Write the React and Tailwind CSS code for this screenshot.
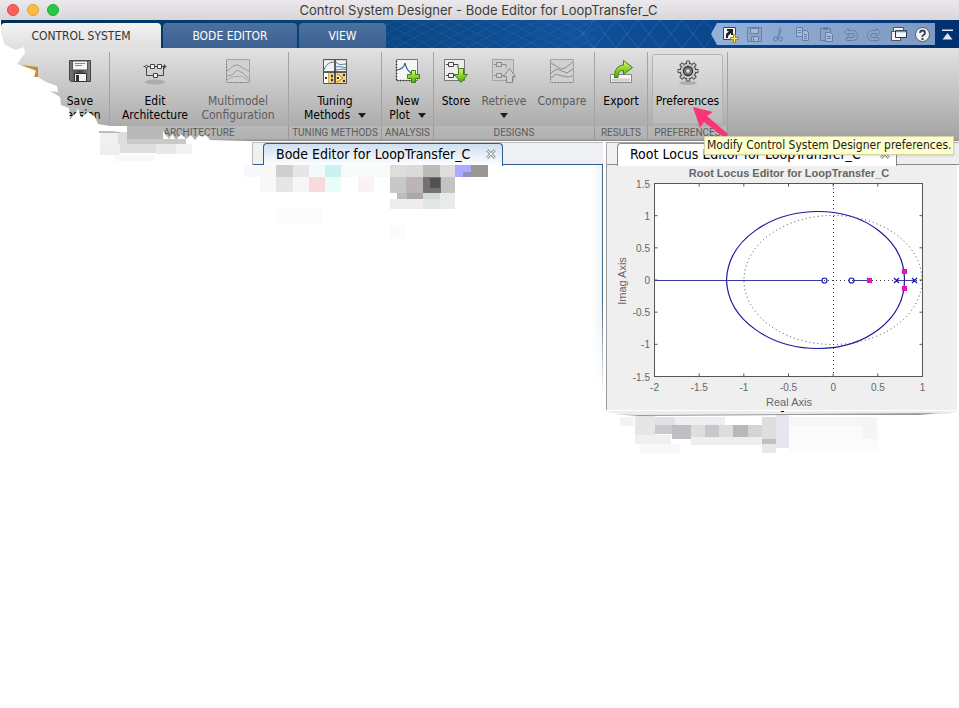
import React from "react";

const lucida = "font-['DejaVu_Sans_Condensed','Lucida_Grande','Noto_Sans',sans-serif]";

function DropArrow() {
  return (
    <svg width="8" height="5" viewBox="0 0 8 5" className="inline-block">
      <path d="M0 0h8L4 5z" fill="#1c1c1c" />
    </svg>
  );
}

function SaveIcon() {
  return (
    <svg width="28" height="28" viewBox="0 0 28 28">
      <defs>
        <linearGradient id="disk" x1="0" x2="1">
          <stop offset="0" stopColor="#777" />
          <stop offset="0.5" stopColor="#444" />
          <stop offset="1" stopColor="#888" />
        </linearGradient>
      </defs>
      <path d="M3.500 2.500h21v21H5l-1.500-1.500z" fill="url(#disk)" stroke="#444" />
      <path d="M6.500 3h15v9h-15z" fill="#f6f6f6" stroke="#555" />
      <path d="M9 5.500h10M9 7.500h7" stroke="#888" />
      <path d="M8.500 15.500h12v8h-12z" fill="#f2f2f2" stroke="#333" />
      <path d="M10 17h3v6h-3z" fill="#333" />
    </svg>
  );
}

function ArchitectureIcon() {
  return (
    <svg width="28" height="28" viewBox="0 0 28 28">
      <ellipse cx="14" cy="24" rx="10" ry="2.500" fill="#999" opacity=".6" />
      <g fill="none" stroke="#444">
        <path d="M2.500 8.500h23M5.500 8.500v9h17v-9" />
        <path d="M23.500 6.500v4" strokeWidth="1.500" />
      </g>
      <g fill="#f4f4f4" stroke="#444">
        <circle cx="5.500" cy="8.500" r="1.200" />
        <path d="M9.500 6.500h4v4h-4zM16.500 6.500h4v4h-4zM12.500 15.500h4v4h-4z" />
      </g>
    </svg>
  );
}

function MultimodelIcon() {
  return (
    <svg width="28" height="28" viewBox="0 0 28 28">
      <path d="M2.500 1.500h23v23h-23z" fill="#d0d0d0" stroke="#a4a4a4" />
      <g fill="none" stroke="#999">
        <path d="M3 13c3-1 4-5 9-6 5 0 8 5 13 6M3 18l5-1 5-5 6 3 6 6" />
        <path d="M3 22l5-3 9-1 8 5" stroke="#aaa" />
      </g>
      <path d="M4 24.500h21M2.500 3v21" stroke="#777" strokeDasharray="1 2" />
    </svg>
  );
}

function CompareIcon() {
  return (
    <svg width="28" height="28" viewBox="0 0 28 28">
      <path d="M2.500 1.500h23v23h-23z" fill="#d0d0d0" stroke="#a4a4a4" />
      <g fill="none" stroke="#8f8f8f">
        <path d="M3 5l10 6 4-1 8-6M3 15l6-4 5 2 5 2 6-4M3 20l5-4 6 2 6 1 5-1" />
      </g>
      <path d="M4 24.500h21M2.500 3v21" stroke="#777" strokeDasharray="1 2" />
    </svg>
  );
}

function TuningIcon() {
  return (
    <svg width="28" height="28" viewBox="0 0 28 28">
      <path d="M3 3h11v11H3zM15 3h11v11H15z" fill="#f0f2f4" />
      <path d="M3 15h11v10H3zM15 15h11v10H15z" fill="#f4cf7c" />
      <path d="M3 15h4v10H3z" fill="#fff" />
      <g fill="none" stroke="#5577a3">
        <path d="M3 12C5 6 9 4 13 4M15 4c3 4 6 2 11 2M15 9c4-1 5 0 11 1M15 12c3 0 5-2 11 0" />
      </g>
      <path d="M16 16l6 4-6 4" fill="#fff2c2" stroke="#ae7d25" />
      <path d="M7.500 15v10M10.500 15v10" stroke="#d0a860" />
      <path d="M4 19h2v2H4zM10 17h2v2h-2zM10 21h2v2h-2zM16 19h2v2h-2zM22 16h2v2h-2zM22 22h2v2h-2z" fill="#333" />
      <path d="M14 2v24M2 14h24" stroke="#333" strokeWidth="1.500" />
      <path d="M2.500 1.500h23v24h-23z" fill="none" stroke="#555" />
    </svg>
  );
}

function GreenDefs() {
  return (
    <linearGradient id="green" x1="0" y1="0" x2="0" y2="1">
      <stop offset="0" stopColor="#dcf68a" />
      <stop offset="0.5" stopColor="#8dd32d" />
      <stop offset="1" stopColor="#56a90d" />
    </linearGradient>
  );
}

function NewPlotIcon() {
  return (
    <svg width="28" height="28" viewBox="0 0 28 28">
      <defs><GreenDefs /></defs>
      <path d="M2.500 1.500h21v21h-21z" fill="#f5f6f7" stroke="#777" />
      <path d="M3 12c4-1 7-2 8-7 1 5 3 8 6 10" fill="none" stroke="#345784" strokeWidth="1.200" />
      <path d="M2.500 3v20M3 22.500h13" stroke="#333" strokeDasharray="1 2" strokeWidth="1.500" />
      <path d="M17.500 12.500h4v4h4v4h-4v4h-4v-4h-4v-4h4z" fill="url(#green)" stroke="#3f8110" />
    </svg>
  );
}

function StoreIcon() {
  return (
    <svg width="28" height="28" viewBox="0 0 28 28">
      <path d="M2.500 1.500h20v21h-20z" fill="#eeeeee" stroke="#777" />
      <g fill="#f3f3f3" stroke="#444">
        <path d="M4 6.500h12v4M4 17.500h10" fill="none" />
        <path d="M6.500 4.500h5v4h-5zM6.500 15.500h5v4h-5z" />
      </g>
      <path d="M16.500 10.500h5v6h4l-6.500 8-6.500-8h4z" fill="url(#green)" stroke="#3f8110" />
    </svg>
  );
}

function RetrieveIcon() {
  return (
    <svg width="28" height="28" viewBox="0 0 28 28">
      <path d="M2.500 1.500h21v21h-21z" fill="#cdcdcd" stroke="#a4a4a4" />
      <g fill="#cfcfcf" stroke="#888">
        <path d="M4 6.500h12v3M4 17.500h10" fill="none" />
        <path d="M6.500 4.500h5v4h-5zM6.500 15.500h5v4h-5z" />
        <path d="M16.500 24.500v-6h-3l6-8 6 8h-3v6z" />
      </g>
    </svg>
  );
}

function ExportIcon() {
  return (
    <svg width="28" height="28" viewBox="0 0 28 28">
      <path d="M3.500 16.500h21v8h-21z" fill="#f4f4f4" stroke="#888" />
      <path d="M5 20.500h18v3H5z" fill="#cfcfcf" />
      <path d="M7.500 19.500c0-8 3-12 9-12.500V2.500l9 7-9 7v-4c-5 0-5 2-5.500 7z" fill="url(#green)" stroke="#3f8110" />
    </svg>
  );
}

function GearIcon() {
  const teeth = [0, 45, 90, 135, 180, 225, 270, 315];
  return (
    <svg width="28" height="28" viewBox="0 0 28 28">
      <ellipse cx="14" cy="25" rx="9" ry="2" fill="#999" opacity=".6" />
      <g fill="#c4c4c4" stroke="#3f3f3f">
        {teeth.map((a) => (
          <path key={a} d="M12 7l.5-4h3L16 7" transform={`rotate(${a} 14 13)`} />
        ))}
        <circle cx="14" cy="13" r="7.800" />
      </g>
      {teeth.map((a) => (
        <path key={a} d="M12.700 8l.3-4.500h2l.3 4.500z" fill="#c4c4c4" transform={`rotate(${a} 14 13)`} />
      ))}
      <circle cx="14" cy="13" r="4.500" fill="#888" stroke="#333" strokeWidth="1.300" />
      <circle cx="14" cy="13" r="2.500" fill="#dcdcdc" stroke="#555" />
    </svg>
  );
}

function ToolButton({ icon, lines, drop, muted, className }) {
  return (
    <button
      className={`flex h-[76px] shrink-0 flex-col items-center pt-[9px] text-[12px] leading-[14px] ${muted ? "text-[#5c5c5c]" : "text-black"} ${className}`}
    >
      {icon}
      <span className="mt-2 flex flex-col items-center whitespace-nowrap">
        <span>{lines[0]}</span>
        {(lines[1] || drop) && (
          <span className="flex h-[14px] items-center gap-2">
            {lines[1]}
            {drop && <DropArrow />}
          </span>
        )}
      </span>
    </button>
  );
}

function Group({ label, className, children }) {
  return (
    <section className={`flex shrink-0 flex-col ${className}`}>
      <div className="mt-[3px] flex h-[74px] justify-center border-r border-[#a3a3a3]">
        <div className="-mt-[3px] flex w-full">{children}</div>
      </div>
      <h2 className="h-[13px] overflow-hidden border-r border-[#999] bg-white/15 text-center font-['Roboto',sans-serif] text-[10px] leading-[13px] whitespace-nowrap text-[#5c5c5c]">
        {label}
      </h2>
    </section>
  );
}

const quick = [
  {
    name: "Shortcut",
    art: (
      <>
        <path d="M1.500 1.500h12v12h-12z" fill="#f4f4f4" stroke="#444" />
        <path d="M4 12V8l3-3H5V3h6v6H9V7l-3 3v2z" fill="#222" />
        <path d="M11.500 8.500h2v3h3v2h-3v3h-2v-3h-3v-2h3z" fill="#ffe45c" stroke="#a8801b" />
      </>
    ),
  },
  {
    name: "Save",
    art: (
      <g stroke="#6580a4" fill="#8ba4c8">
        <path d="M1.500 1.500h14v14h-14z" />
        <path d="M4.500 2.500h8v5h-8zM5.500 10.500h7v5h-7zM7.500 11v4" fill="#a3bad9" />
      </g>
    ),
  },
  {
    name: "Cut",
    art: (
      <g stroke="#6580a4" fill="none">
        <path d="M10 1L8 11M12 3l-4 8-2 1" />
        <circle cx="5.500" cy="13" r="2" />
        <circle cx="10.500" cy="13" r="2" />
      </g>
    ),
  },
  {
    name: "Copy",
    art: (
      <g stroke="#6580a4" fill="#a3bad9">
        <path d="M2.500 1.500h6v9h-6zM8.500 4.500h4l2 2v8h-6z" />
        <path d="M4 4.500h3M4 6.500h3M10 8.500h3M10 10.500h3M10 12.500h3" />
      </g>
    ),
  },
  {
    name: "Paste",
    art: (
      <g stroke="#6580a4" fill="#8ba4c8">
        <path d="M2.500 2.500h10v12h-10zM5.500 1.500h4v2h-4z" />
        <path d="M7.500 6.500h5l2 2v7h-7z" fill="#a3bad9" />
        <path d="M9 10.500h4M9 12.500h4" />
      </g>
    ),
  },
  {
    name: "Undo",
    art: <path d="M6.500 2.500l-4 3.500 4 3.500V7.500h4q2 0 2 2t-2 2h-6v3h6q5 0 5-5t-5-5h-4z" fill="#8ba4c8" stroke="#6580a4" />,
  },
  {
    name: "Redo",
    art: <path d="M10.500 2.500l4 3.500-4 3.500V7.500h-4q-2 0-2 2t2 2h6v3h-6q-5 0-5-5t5-5h4z" fill="#8ba4c8" stroke="#6580a4" />,
  },
  {
    name: "Switch windows",
    art: (
      <>
        <path d="M3.500 1.500h10v3M3.500 1.500v4M1.500 5.500h3M1.500 5.500v9h9v-3" fill="none" stroke="#555" />
        <path d="M4 2h9v3H4zM2 6h4v6h4v2H2z" fill="#f3f3f3" />
        <path d="M5.500 4.500h11v7h-11z" fill="#f4f8ff" stroke="#333" />
        <path d="M6 5.500h10" stroke="#6a8cc2" strokeWidth="1.500" />
      </>
    ),
  },
  {
    name: "Help",
    art: (
      <>
        <circle cx="8.500" cy="8.500" r="7" fill="#f2f4f7" stroke="#556" />
        <path d="M6 7q0-2.500 2.500-2.500T11 7q0 1-1.500 2T8.500 11" fill="none" stroke="#334460" strokeWidth="1.800" />
        <path d="M7.500 12h2v2h-2z" fill="#334460" />
      </>
    ),
  },
];

function TabStrip() {
  return (
    <div className="relative flex h-7 items-end justify-between bg-linear-to-r from-[#003058] via-[#11529c] via-60% to-[#003070]">
      <svg className="absolute inset-0 h-full w-full" aria-hidden="true">
        <defs>
          <pattern id="mesh" width="22" height="28" patternUnits="userSpaceOnUse">
            <path d="M0 0l22 28M22 0L0 28" fill="none" stroke="#6fa0d8" strokeOpacity=".22" />
          </pattern>
          <pattern id="fine" width="18" height="9" patternUnits="userSpaceOnUse">
            <path d="M0 0l18 9M18 0L0 9" fill="none" stroke="#6fa0d8" strokeOpacity=".12" />
          </pattern>
        </defs>
        <rect x="386" width="210" height="28" fill="url(#fine)" />
        <rect x="580" width="140" height="28" fill="url(#mesh)" />
      </svg>
      <nav role="tablist" className="relative flex gap-[2px] pl-px text-[12px] leading-6">
        <button role="tab" aria-selected="true" className="h-[25px] w-[160px] rounded-t-[4px] bg-linear-to-b from-[#f3f3f3] to-[#dfdfdf] text-[#333]">
          CONTROL SYSTEM
        </button>
        <button role="tab" className="h-[25px] w-[134px] rounded-t-[4px] bg-linear-to-b from-[#4d719d] to-[#3b6093] text-white">
          BODE EDITOR
        </button>
        <button role="tab" className="h-[25px] w-[87px] rounded-t-[4px] bg-linear-to-b from-[#4d719d] to-[#3b6093] text-white">
          VIEW
        </button>
      </nav>
      <div className="relative mb-[3px] flex h-[22px] items-center pr-1.5">
        <svg width="6" height="22" viewBox="0 0 6 22">
          <path d="M6 0v22L0 11z" fill="#94b0d8" />
        </svg>
        <div className="flex h-[22px] items-center gap-[7px] bg-linear-to-r from-[#94b0d8] to-[#7f9ac2] pr-1 pl-[5px]">
          {quick.map((q) => (
            <button key={q.name} aria-label={q.name} className="block">
              <svg width="17" height="17" viewBox="0 0 17 17">{q.art}</svg>
            </button>
          ))}
        </div>
        <button aria-label="Minimize toolstrip" className="ml-[7px]">
          <svg width="11" height="11" viewBox="0 0 11 11">
            <path d="M0 .5h11v1.500H0zM5.500 4l5 6.500h-10z" fill="#dfe6ee" />
          </svg>
        </button>
      </div>
    </div>
  );
}

function Toolstrip() {
  return (
    <div className="flex h-[93px] border-b border-[#8d8d8d] bg-linear-to-b from-[#e2e2e2] to-[#a3a3a3] pt-px">
      <Group className="w-[110px]" label="">
        <ToolButton className="ml-[51px] w-[58px]" icon={<SaveIcon />} lines={["Save", "Session"]} />
      </Group>
      <Group className="w-[179px]" label="ARCHITECTURE">
        <ToolButton className="w-[90px]" icon={<ArchitectureIcon />} lines={["Edit", "Architecture"]} />
        <ToolButton className="w-[76px]" icon={<MultimodelIcon />} lines={["Multimodel", "Configuration"]} muted />
      </Group>
      <Group className="w-[93px]" label="TUNING METHODS">
        <ToolButton className="w-full" icon={<TuningIcon />} lines={["Tuning", "Methods"]} drop />
      </Group>
      <Group className="w-[52px]" label="ANALYSIS">
        <ToolButton className="w-full" icon={<NewPlotIcon />} lines={["New", "Plot"]} drop />
      </Group>
      <Group className="w-[161px]" label="DESIGNS">
        <ToolButton className="w-11" icon={<StoreIcon />} lines={["Store"]} />
        <ToolButton className="w-[52px]" icon={<RetrieveIcon />} lines={["Retrieve"]} drop muted />
        <ToolButton className="w-16" icon={<CompareIcon />} lines={["Compare"]} muted />
      </Group>
      <Group className="w-[53px]" label="RESULTS">
        <ToolButton className="w-full" icon={<ExportIcon />} lines={["Export"]} />
      </Group>
      <Group className="w-[80px]" label="PREFERENCES">
        <div className="mx-1 mt-[5px] flex h-[70px] w-full justify-center rounded-[3px] border border-[#b2b2b2] bg-white/15">
          <ToolButton className="-mt-[6px] w-full" icon={<GearIcon />} lines={["Preferences"]} />
        </div>
      </Group>
    </div>
  );
}

const xTicks = ["-2", "-1.5", "-1", "-0.5", "0", "0.5", "1"];
const yTicks = ["1.5", "1", "0.5", "0", "-0.5", "-1", "-1.5"];

function RootLocus() {
  const px = (i) => 47.5 + i * 44.667;
  const py = (i) => 18.5 + i * 32.167;
  return (
    <svg width="349" height="246" viewBox="0 0 349 246" className="block font-['Liberation_Sans',Arial,sans-serif]" role="img" aria-label="Root locus plot">
      <text x="182" y="12" fontSize="11" fontWeight="700" fill="#666" textAnchor="middle">Root Locus Editor for LoopTransfer_C</text>
      <rect x="47.500" y="18.500" width="268" height="193" fill="#fff" stroke="#555" />
      {xTicks.map((t, i) => (
        <g key={t}>
          <path d={`M${px(i)} 211.500v-3M${px(i)} 18.500v3`} stroke="#555" />
          <text x={px(i)} y="226" fontSize="10" fill="#666" textAnchor="middle">{t}</text>
        </g>
      ))}
      {yTicks.map((t, i) => (
        <g key={t}>
          <path d={`M47.500 ${py(i)}h3M315.500 ${py(i)}h-3`} stroke="#555" />
          <text x="43" y={py(i) + 4} fontSize="10" fill="#666" textAnchor="end">{t}</text>
        </g>
      ))}
      <text x="182" y="241" fontSize="11" fill="#666" textAnchor="middle">Real Axis</text>
      <text transform="translate(19 116) rotate(-90)" fontSize="11" fill="#666" textAnchor="middle">Imag Axis</text>
      <g fill="none" stroke="#444" strokeDasharray="1 3">
        <ellipse cx="226" cy="115" rx="89" ry="64.500" />
        <path d="M226.500 19v192M217 115.500h98" />
      </g>
      <path d="M119.500 115C121 74 165 46.500 211 46.500C258 46.500 297.500 75 297.500 115C297.500 155 258 183.500 211 183.500C165 183.500 121 156 119.500 115z" fill="none" stroke="#1a1a9c" strokeWidth="1.200" />
      <path d="M48 115.500h167M247 115.500h15M289 115.500h19" stroke="#3a3aa0" strokeWidth="1.200" />
      <g fill="none" stroke="#1616b0" strokeWidth="1.200">
        <circle cx="217.500" cy="115.500" r="2.500" />
        <circle cx="244.500" cy="115.500" r="2.500" />
        <path d="M287 113l5 5M292 113l-5 5M305 113l5 5M310 113l-5 5M260 113l5 5" />
      </g>
      <path d="M260 113h5v5h-5zM295 104h5v5h-5zM295 121h5v5h-5z" fill="#dd18b8" />
    </svg>
  );
}

function CloseMark() {
  return (
    <svg width="10" height="10" viewBox="0 0 10 10">
      <path d="M1 1l8 8M9 1L1 9" stroke="#999" strokeWidth="3" />
      <path d="M1 1l8 8M9 1L1 9" stroke="#fff" />
    </svg>
  );
}

function DocumentTab({ title, active }) {
  return (
    <div className={`flex h-[23px] w-full border-t border-l ${active ? "border-[#bbb] bg-[#eef0f4]" : "border-[#aaa] bg-[#eee]"}`}>
      <div className={`w-[10px] border-b bg-[#f0f0f0] ${active ? "border-[#2f5c94]" : "border-[#888]"}`} />
      <div
        role="tab"
        className={`flex h-[23px] items-center justify-between rounded-t-[4px] border-x border-t pr-[6px] pb-[2px] pl-3 text-[14px] leading-[18px] whitespace-nowrap text-black ${active ? "w-[240px] border-[#2f5c94] bg-linear-to-b from-[#cfdff0] to-white" : "w-[280px] border-[#888] bg-white"}`}
      >
        {title}
        <button aria-label="Close tab"><CloseMark /></button>
      </div>
      <div className={`flex-1 border-b ${active ? "border-[#2f5c94]" : "border-[#888]"}`} />
    </div>
  );
}

const blocks = [
  [276, 165, 17, 12, "#cfcfcf"], [293, 165, 16, 12, "#e6e6e6"], [309, 165, 16, 12, "#f0fbfa"], [325, 165, 16, 12, "#c9f2f0"],
  [244, 165, 16, 12, "#f8f8fb"], [260, 165, 16, 27, "#f8f8f8"], [276, 177, 17, 15, "#e6e6e6"], [293, 177, 16, 15, "#f8f5f6"],
  [309, 177, 16, 15, "#f8dcdc"], [325, 177, 16, 15, "#e8fcfa"], [341, 165, 49, 12, "#f8fafa"], [358, 177, 16, 15, "#f9f3f5"],
  [390, 165, 16, 12, "#dddddd"], [406, 165, 17, 12, "#dadada"], [423, 165, 17, 12, "#bdbbb9"], [440, 165, 15, 12, "#dddddd"],
  [455, 165, 16, 12, "#aaaaff"], [463, 172, 9, 5, "#9391bb"], [471, 165, 17, 12, "#9a9695"],
  [390, 177, 16, 16, "#c9c8c8"], [406, 177, 17, 16, "#bbb5b8"], [423, 177, 18, 16, "#737171"], [430, 178, 10, 10, "#515151"],
  [441, 177, 14, 16, "#c3c3c3"], [397, 193, 10, 6, "#bdbdbd"], [407, 193, 16, 6, "#aaa8a9"], [423, 193, 17, 6, "#d2dada"],
  [440, 193, 15, 16, "#e9eaea"], [390, 199, 33, 10, "#ededed"], [423, 199, 17, 10, "#e4e5e6"],
  [276, 209, 46, 15, "#fcfcfc"], [390, 225, 15, 14, "#fbfbfb"],
  [127, 127, 36, 12, "#b9b9b9"], [120, 139, 66, 5, "#c9c9c9"], [118, 132, 9, 12, "#dddddd"], [100, 132, 18, 12, "#f0f0f0"],
  [100, 144, 20, 11, "#eeeeee"], [120, 144, 36, 9, "#dddddd"],
  [156, 144, 20, 10, "#e8e8e8"], [176, 144, 16, 10, "#f2f2f2"], [115, 155, 40, 6, "#f8f8f8"],
  [620, 417, 14, 9, "#f3f3f3"], [635, 415, 20, 20, "#e6e6e6"], [655, 417, 20, 8, "#e2e2e6"], [675, 417, 50, 8, "#eeeef1"],
  [655, 425, 17, 9, "#c9c9cd"], [672, 425, 19, 14, "#bfbfc3"], [691, 425, 14, 12, "#dedee1"], [705, 425, 14, 14, "#c8c8cc"],
  [719, 425, 14, 12, "#dddde0"], [733, 425, 15, 14, "#b8b8bb"], [748, 425, 14, 15, "#d4d4d8"], [762, 417, 14, 22, "#dedede"],
  [762, 439, 14, 5, "#c0c0c0"], [762, 444, 14, 9, "#e8e8e8"], [776, 413, 13, 35, "#e6e6ec"], [635, 435, 36, 9, "#f0f0f0"],
  [691, 437, 71, 8, "#eeeeee"], [789, 417, 75, 9, "#f6f6f6"], [789, 426, 90, 26, "#fbfbfb"], [862, 417, 15, 22, "#f5f5f5"],
  [640, 444, 40, 10, "#f8f8f8"],
];

function Erasure() {
  return (
    <svg className="pointer-events-none absolute top-0 left-0" width="959" height="470" viewBox="0 0 959 470" aria-hidden="true">
      <path d="M21 65l17 2v12l-4-2 1-7z" fill="#c58e25" />
      <path
        d="M0 20L1 20L1 32L4 44L11 48L16 50L24 47L25 53L17 64L36 71L34 77L38 77L46 82L57 86L58 92L50 91L60 97L61 105L69 108L70 119L76 113L78 108L81 118L88 112L95 117L98 124L110 126L127 126L127 131L163 131L165 134L169 139L172 134L176 140L181 134L186 139L191 135L195 140L199 135L202 137L206 135L210 140L252 141L252 170L0 170Z"
        fill="#fff"
      />
      {blocks.map(([x, y, w, h, fill]) => (
        <rect key={`${x}-${y}`} x={x} y={y} width={w} height={h} fill={fill} />
      ))}
      <path d="M99 131h12l9 1v1H99z" fill="#bbb" />
      <path d="M607 411h351l-10 3-160 1-149 0-26-2z" fill="#ececec" />
      <path d="M607 410h351v1H607z" fill="#fff" />
      <path d="M613 414l26 1 150-1 150-1-20 2H789l-150 1z" fill="#999" />
      <path d="M781 411h3v1h-3z" fill="#000" />
    </svg>
  );
}

export default function App() {
  return (
    <main className={`relative min-h-screen w-full overflow-hidden bg-white antialiased ${lucida}`}>
      <header className="relative flex h-5 items-center justify-center bg-linear-to-b from-[#ebe9eb] to-[#d8d6d8] pr-0.5">
        <div className="absolute left-[7px] flex gap-2">
          <button aria-label="Close" className="size-3 rounded-full border border-[#df4744] bg-[#fc605c]" />
          <button aria-label="Minimize" className="size-3 rounded-full border border-[#de9f34] bg-[#fdbc40]" />
          <button aria-label="Zoom" className="size-3 rounded-full border border-[#27aa35] bg-[#29c941]" />
        </div>
        <h1 className="font-['Inter',sans-serif] text-[13px] leading-5 text-[#3c3c3c]">
          Control System Designer - Bode Editor for LoopTransfer_C
        </h1>
      </header>
      <TabStrip />
      <Toolstrip />

      <div className="flex pt-px pl-[252px]">
        <article className="w-[351px] shrink-0">
          <DocumentTab title="Bode Editor for LoopTransfer_C" active />
          <div className="ml-auto h-[230px] w-3 border-r border-[#4b6a82] bg-linear-to-l from-[#eef3f7] to-white mask-b-from-60%" />
        </article>
        <article className="ml-[3px] min-w-0 flex-1">
          <DocumentTab title="Root Locus Editor for LoopTransfer_C" />
          <div className="rounded-bl-[3px] border-r-2 border-l border-r-white border-l-[#999] bg-[#efefef]">
            <RootLocus />
          </div>
        </article>
      </div>

      <Erasure />
      <svg className="pointer-events-none absolute top-[106px] left-[692px]" width="38" height="34" viewBox="0 0 38 34">
        <path d="M1 1l20 5-6 4 21 18-3 4-21-16-4 6z" fill="#fb3474" />
      </svg>
      <div role="tooltip" className="absolute top-[136px] left-[704px] border border-[#d4d4a8] bg-[#ffffcb] px-0.5 text-[12px] leading-[17px] whitespace-nowrap text-[#222] shadow-sm">
        Modify Control System Designer preferences.
      </div>
    </main>
  );
}
